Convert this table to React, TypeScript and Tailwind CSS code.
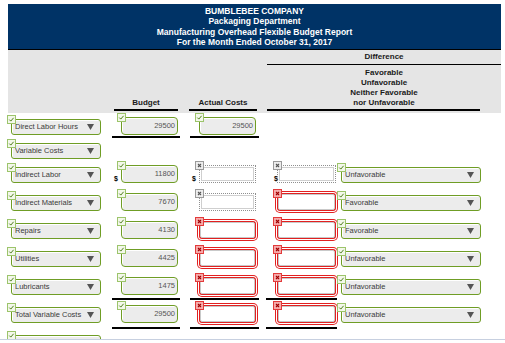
import React from "react";

type IconKind = "check" | "grey" | "red";

function Badge({ kind }: { kind: IconKind }) {
  const fill = kind === "check" ? "#f3f8ea" : kind === "grey" ? "#ededed" : "#f6aaaa";
  const stroke = kind === "check" ? "#9cc46b" : kind === "grey" ? "#9a9a9a" : "#e23b3b";
  return (
    <div className="absolute -left-[4px] -top-[4px] z-10 w-[9px] h-[9px]">
      <svg width="9" height="9" viewBox="0 0 9 9">
        <rect x="0.5" y="0.5" width="8" height="8" fill={fill} stroke={stroke} />
        {kind === "check" ? (
          <path d="M2.3 4.6 L3.8 6.1 L6.6 2.8" fill="none" stroke="#4f7f1c" strokeWidth="1" />
        ) : (
          <path
            d="M3 3 L6 6 M6 3 L3 6"
            fill="none"
            stroke={kind === "grey" ? "#555" : "#a00000"}
            strokeWidth="1.1"
          />
        )}
      </svg>
    </div>
  );
}

function Arrow() {
  return (
    <svg width="7" height="6" viewBox="0 0 7 6" className="shrink-0">
      <polygon points="0,0 7,0 3.5,6" fill="#555" />
    </svg>
  );
}

function Select({ label, width }: { label: string; width: "left" | "right" }) {
  return (
    <div className={`relative h-[16px] ${width === "left" ? "w-[90px]" : "w-[140px]"}`}>
      <Badge kind="check" />
      <div className="h-full rounded-[3px] border-[1.5px] border-[#6f9d25] bg-[#ececec] flex items-center pl-[3px] pr-[6px] text-[7.5px] text-[#3a3a3a] shadow-[inset_1px_1px_0_#fff]">
        <span className="flex-1 truncate leading-none">{label}</span>
        <Arrow />
      </div>
    </div>
  );
}

function GreenInput({ value, wide }: { value: string; wide?: boolean }) {
  return (
    <div className={`relative h-[18px] ${wide ? "w-[59px]" : "w-[57px]"}`}>
      <Badge kind="check" />
      <div className="h-full rounded-[4px] border-[1.5px] border-[#6f9d25] bg-[#ececec] flex items-center justify-end pr-[2px] text-[7.5px] text-[#555] leading-none shadow-[inset_1px_1px_0_#fff]">
        {value}
      </div>
    </div>
  );
}

function DottedInput({ wide }: { wide?: boolean }) {
  return (
    <div className={`relative h-[18px] ${wide ? "w-[59px]" : "w-[57px]"}`}>
      <Badge kind="grey" />
      <div className="h-full border border-dotted border-[#8f8f8f] p-[1px]">
        <div className="h-full border border-[#cfcfcf] bg-white" />
      </div>
    </div>
  );
}

function RedInput({ wide }: { wide?: boolean }) {
  return (
    <div className={`relative h-[18px] ${wide ? "w-[59px]" : "w-[57px]"}`}>
      <Badge kind="red" />
      <div className="h-[16px] m-[1px] rounded-[2px] border border-[#c9c9c9] bg-white shadow-[0_0_0_1px_#e22020,0_0_0_2px_#ffffff,0_0_0_3px_#e22020]" />
    </div>
  );
}

type Cell = { kind: "green"; value: string; dollar?: boolean } | { kind: "dotted"; dollar?: boolean } | { kind: "red" } | null;

function Field({ cell, wide }: { cell: Cell; wide?: boolean }) {
  if (!cell) return null;
  const dollar = cell.kind !== "red" && cell.dollar;
  return (
    <div className="flex items-end">
      <span
        className={`${wide ? "w-[11px] pl-[8px]" : "w-[9px] pl-[2px]"} text-[7px] font-bold leading-none pb-[1px] text-black`}
      >
        {dollar ? "$" : ""}
      </span>
      {cell.kind === "green" && <GreenInput value={cell.value} wide={wide} />}
      {cell.kind === "dotted" && <DottedInput wide={wide} />}
      {cell.kind === "red" && <RedInput wide={wide} />}
    </div>
  );
}

type RowDef = {
  label: string;
  budget: Cell;
  actual: Cell;
  diff: Cell;
  select?: string;
  line?: "one" | "three" | "four";
  h: "first" | "short" | "normal";
};

const rows: RowDef[] = [
  {
    label: "Direct Labor Hours",
    budget: { kind: "green", value: "29500" },
    actual: { kind: "green", value: "29500" },
    diff: null,
    line: "one",
    h: "first",
  },
  { label: "Variable Costs", budget: null, actual: null, diff: null, h: "short" },
  {
    label: "Indirect Labor",
    budget: { kind: "green", value: "11800", dollar: true },
    actual: { kind: "dotted", dollar: true },
    diff: { kind: "dotted", dollar: true },
    select: "Unfavorable",
    h: "normal",
  },
  {
    label: "Indirect Materials",
    budget: { kind: "green", value: "7670" },
    actual: { kind: "dotted" },
    diff: { kind: "red" },
    select: "Favorable",
    h: "normal",
  },
  {
    label: "Repairs",
    budget: { kind: "green", value: "4130" },
    actual: { kind: "red" },
    diff: { kind: "red" },
    select: "Favorable",
    h: "normal",
  },
  {
    label: "Utilities",
    budget: { kind: "green", value: "4425" },
    actual: { kind: "red" },
    diff: { kind: "red" },
    select: "Unfavorable",
    h: "normal",
  },
  {
    label: "Lubricants",
    budget: { kind: "green", value: "1475" },
    actual: { kind: "red" },
    diff: { kind: "red" },
    select: "Unfavorable",
    line: "three",
    h: "normal",
  },
  {
    label: "Total Variable Costs",
    budget: { kind: "green", value: "29500" },
    actual: { kind: "red" },
    diff: { kind: "red" },
    select: "Unfavorable",
    line: "four",
    h: "normal",
  },
  { label: "", budget: null, actual: null, diff: null, h: "normal" },
];

function Underline({ line }: { line?: RowDef["line"] }) {
  if (!line) return null;
  const mt = line === "one" ? "mt-[1px]" : line === "three" ? "mt-[3px]" : "mt-[4px]";
  return <div className={`h-[2px] bg-black ${mt}`} />;
}

function Row({ r }: { r: RowDef }) {
  const hc = r.h === "first" ? "h-[26px] pt-[4px]" : r.h === "short" ? "h-[24px] pt-[2px]" : "h-[28px] pt-[2px]";
  return (
    <div className={`flex items-start ${hc}`}>
      <div className="w-[112px] pl-[11px] pt-[2px]">
        <Select label={r.label} width="left" />
      </div>
      <div className="w-[68px] flex flex-col">
        <Field cell={r.budget} />
        <Underline line={r.line} />
      </div>
      <div className="ml-[10px] w-[69px] flex flex-col">
        <Field cell={r.actual} />
        <Underline line={r.line} />
      </div>
      <div className="ml-[7px] w-[71px] flex flex-col">
        <Field cell={r.diff} wide />
        {r.line && r.line !== "one" ? <Underline line={r.line} /> : null}
      </div>
      <div className="ml-[4px] w-[140px] pt-[2px]">{r.select ? <Select label={r.select} width="right" /> : null}</div>
    </div>
  );
}

export default function App() {
  return (
    <div className="w-[505px] h-[343px] bg-white overflow-hidden font-['Liberation_Sans',Arial,sans-serif]">
      <div className="h-[340px] overflow-hidden border-b border-[#c7d0e0] pt-[4px]">
        <div className="ml-[8px] w-[493px] h-[45px] bg-[#003366] flex flex-col items-center justify-center text-white font-bold text-[8.5px] leading-[10.4px]">
          <div>BUMBLEBEE COMPANY</div>
          <div>Packaging Department</div>
          <div>Manufacturing Overhead Flexible Budget Report</div>
          <div>For the Month Ended October 31, 2017</div>
        </div>
        <div className="ml-[8px] w-[493px] h-[64px] bg-[#e5e5e5] border-t border-black flex text-[8px] font-bold text-[#1a1a1a] leading-[10px]">
          <div className="w-[106px]" />
          <div className="w-[64px] flex flex-col justify-end items-center">
            <span className="pb-[1px]">Budget</span>
            <div className="w-full h-[2px] bg-black mb-[2px]" />
          </div>
          <div className="ml-[11px] w-[68px] flex flex-col justify-end items-center">
            <span className="pb-[1px]">Actual Costs</span>
            <div className="w-full h-[2px] bg-black mb-[2px]" />
          </div>
          <div className="ml-[10px] w-[234px] flex flex-col">
            <div className="h-[15px] flex items-center justify-center border-b border-black">Difference</div>
            <div className="flex-1 flex flex-col justify-end items-center pb-[1px]">
              <span>Favorable</span>
              <span>Unfavorable</span>
              <span>Neither Favorable</span>
              <span>nor Unfavorable</span>
            </div>
            <div className="h-[2px] bg-black mb-[2px] mr-[21px]" />
          </div>
        </div>
        {rows.map((r, i) => (
          <Row key={i} r={r} />
        ))}
      </div>
    </div>
  );
}
